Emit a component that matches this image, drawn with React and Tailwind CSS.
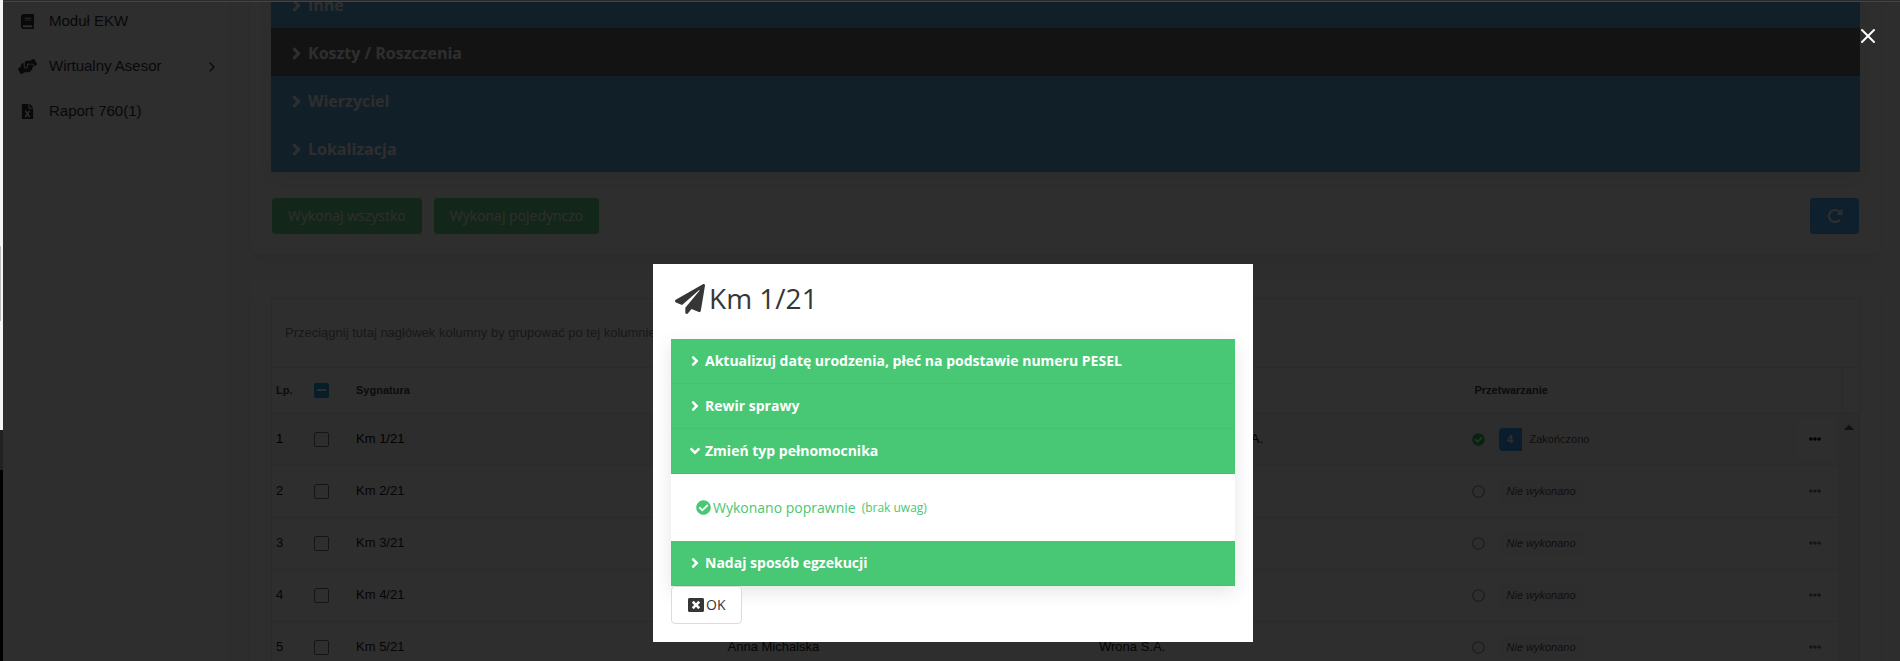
import { useState } from "react";
import {
    FaAngleDown,
    FaAngleRight,
    FaBook,
    FaCaretUp,
    FaCheckCircle,
    FaEllipsisH,
    FaFileExcel,
    FaHandsHelping,
    FaPaperPlane,
    FaRegCircle,
    FaWindowClose,
} from "react-icons/fa";
import { FaRotateRight } from "react-icons/fa6";
import { ChevronRight, X } from "lucide-react";

const menu = [
    { label: "Moduł EKW", icon: FaBook, size: 15 },
    { label: "Wirtualny Asesor", icon: FaHandsHelping, size: 19, nested: true },
    { label: "Raport 760(1)", icon: FaFileExcel, size: 15 },
];

const sections = [
    { label: "Inne" },
    { label: "Koszty / Roszczenia", dark: true },
    { label: "Wierzyciel" },
    { label: "Lokalizacja" },
];

const cases = [
    { id: 1, creditor: "Towarzystwo Handlowe S.A.", done: 4 },
    { id: 2 },
    { id: 3 },
    { id: 4 },
    { id: 5, debtor: "Anna Michalska", creditor: "Wrona S.A." },
];

const results = [
    "Aktualizuj datę urodzenia, płeć na podstawie numeru PESEL",
    "Rewir sprawy",
    "Zmień typ pełnomocnika",
    "Nadaj sposób egzekucji",
];

const Sidebar = () => (
    <aside className="w-[226px] shrink-0 border-r border-[#f0f0f0] font-['Liberation_Sans',sans-serif] text-[15px] text-[#333]">
        <nav className="-mt-[3px]">
            {menu.map(({ label, icon: Icon, size, nested }) => (
                <a key={label} href="#" className="flex h-[45px] items-center pr-2">
                    <span className="ml-2.5 mr-2 flex w-7 justify-center">
                        <Icon size={size} />
                    </span>
                    <span className="flex-1">{label}</span>
                    {nested && <ChevronRight size={16} />}
                </a>
            ))}
        </nav>
    </aside>
);

const Sections = () => (
    <section className="-mt-[42px] rounded-md bg-[#fcfcfc] p-5 shadow-[0_6px_18px_rgba(0,0,0,0.05)]">
        <div className="shadow-[0_6px_18px_rgba(0,0,0,0.06)]">
            {sections.map(({ label, dark }) => (
                <button
                    key={label}
                    className={`flex h-12 w-full items-center gap-0.5 px-4 pt-0.5 text-base font-bold text-white ${dark ? "bg-[#6a6a6a]" : "bg-[#5eacde]"}`}
                >
                    <FaAngleRight size={19} />
                    {label}
                </button>
            ))}
        </div>
        <div className="mt-[26px] flex gap-3 px-px text-sm text-white">
            <button className="h-9 rounded-sm bg-[#6ad391] px-4">Wykonaj wszystko</button>
            <button className="h-9 rounded-sm bg-[#6ad391] px-4">Wykonaj pojedynczo</button>
            <button aria-label="Odśwież" className="ml-auto flex h-9 w-[49px] items-center justify-center rounded-sm bg-[#4ea9ff]">
                <FaRotateRight size={16} />
            </button>
        </div>
    </section>
);

const Status = ({ done }) => {
    if (!done) {
        return (
            <div className="flex items-center text-[11px] italic text-[#555]">
                <FaRegCircle size={13} className="mr-3.5 text-[#999]" />
                <span className="rounded bg-[#f8f8f8] px-2 py-1">Nie wykonano</span>
            </div>
        );
    }
    return (
        <div className="flex items-center text-[11px] text-[#555]">
            <FaCheckCircle size={13} className="mr-3.5 text-[#2fbf62]" />
            <span className="mr-2 flex size-[23px] items-center justify-center rounded-l bg-[#3f9df8] font-bold text-white">
                {done}
            </span>
            Zakończono
        </div>
    );
};

const CaseGrid = () => (
    <section className="mt-6 rounded-md bg-[#fcfcfc] p-5 shadow-[0_6px_18px_rgba(0,0,0,0.05)]">
        <div className="border border-[#e8e8e8] font-['Liberation_Sans',sans-serif] text-[13px]">
            <div className="flex h-[69px] items-center border-b border-[#e8e8e8] px-[13px] text-[#888]">
                Przeciągnij tutaj nagłówek kolumny by grupować po tej kolumnie
            </div>
            <div className="flex">
                <table className="w-full table-fixed text-left text-[#222]">
                    <thead>
                        <tr className="h-[45px] border-b border-[#e8e8e8] text-[11px] text-[#444]">
                            <th className="w-10 px-1">Lp.</th>
                            <th className="w-10">
                                <label className="relative ml-0.5 flex size-[15px] items-center justify-center">
                                    <input type="checkbox" aria-label="Zaznacz wszystkie" className="absolute inset-0 appearance-none rounded-xs bg-[#2aa5dc]" />
                                    <span className="relative h-0.5 w-[9px] bg-white" />
                                </label>
                            </th>
                            <th className="px-1">Sygnatura</th>
                            <th className="px-1">Dłużnik</th>
                            <th className="px-1">Wierzyciel</th>
                            <th className="px-2">Przetwarzanie</th>
                        </tr>
                    </thead>
                    <tbody>
                        {cases.map(({ id, debtor, creditor, done }) => (
                            <tr key={id} className={`h-[52px] border-b border-[#e8e8e8] ${done ? "bg-[#f8f8f8] text-black" : ""}`}>
                                <td className="px-1">{id}</td>
                                <td>
                                    <input
                                        type="checkbox"
                                        aria-label={`Km ${id}/21`}
                                        className="ml-0.5 block size-[15px] appearance-none rounded-xs border border-[#777]"
                                    />
                                </td>
                                <td className="px-1">Km {id}/21</td>
                                <td className="px-1">{debtor}</td>
                                <td className="px-1">{creditor}</td>
                                <td className="pl-[5px]">
                                    <div className="flex items-center justify-between">
                                        <Status done={done} />
                                        <button
                                            aria-label="Więcej"
                                            className={`mr-1 flex h-10 w-[38px] items-center justify-center ${done ? "bg-[#fcfcfc] text-black" : "text-[#777]"}`}
                                        >
                                            <FaEllipsisH size={12} />
                                        </button>
                                    </div>
                                </td>
                            </tr>
                        ))}
                    </tbody>
                </table>
                <div className="w-[21px] shrink-0 bg-[#f4f4f4] text-[#666]">
                    <div className="h-[45px] border-b border-[#e8e8e8] bg-[#fcfcfc] pl-1">
                        <div className="h-full border-l border-[#e8e8e8]" />
                    </div>
                    <FaCaretUp size={16} className="mx-auto mt-1.5" />
                </div>
            </div>
        </div>
    </section>
);

const ResultModal = ({ onClose }) => {
    const [open, setOpen] = useState(2);

    return (
        <div className="absolute inset-0 flex items-start justify-center bg-black/82 pl-[3px] pt-[262px]">
            <button onClick={onClose} aria-label="Zamknij" className="absolute right-5 top-[22px] text-white">
                <X size={24} />
            </button>
            <div role="dialog" aria-labelledby="modal-title" className="w-[600px] bg-white px-[18px] pb-[18px] pt-4 text-[#363636]">
                <h1 id="modal-title" className="flex h-[59px] items-start gap-1 pl-1 text-[28px] leading-9 font-medium">
                    <FaPaperPlane size={30} className="mt-1" />
                    Km 1/21
                </h1>
                <div className="shadow-[0_6px_18px_rgba(0,0,0,0.1)]">
                    {results.map((label, i) => (
                        <div key={label}>
                            <button
                                onClick={() => setOpen(i)}
                                className="flex h-[45px] w-full items-center gap-0.5 border-b border-[#45c172] bg-[#48c774] px-4 text-sm font-bold text-white"
                            >
                                {open === i ? <FaAngleDown size={16} /> : <FaAngleRight size={16} />}
                                {label}
                            </button>
                            {open === i && (
                                <p className="flex h-[67px] items-center px-[25px] text-sm text-[#48c774]">
                                    <FaCheckCircle size={15} className="mr-0.5" />
                                    Wykonano poprawnie
                                    <small className="ml-1.5 text-xs">(brak uwag)</small>
                                </p>
                            )}
                        </div>
                    ))}
                </div>
                <button
                    onClick={onClose}
                    className="relative flex h-[38px] items-center gap-0.5 rounded border border-[#dbdbdb] bg-white px-4 text-sm"
                >
                    <FaWindowClose size={16} />
                    OK
                </button>
            </div>
        </div>
    );
};

export default function App() {
    const [showModal, setShowModal] = useState(true);

    return (
        <div className="flex h-screen overflow-hidden bg-[#fcfcfc] font-['Open_Sans',sans-serif]">
            {/* edge of the window behind */}
            <div className="flex w-[3px] shrink-0 flex-col bg-black">
                <div className="h-[246px] bg-[#f5f5f5]" />
                <div className="h-[75px] border-l border-[#bbb] bg-[#f5f5f5]" />
                <div className="h-[109px] bg-[#f5f5f5]" />
                <div className="h-10 bg-[#222]" />
            </div>
            <div className="flex min-w-0 flex-1 flex-col">
                <div className="h-0.5 shrink-0 border-b border-[#444] bg-[#2b2b2b]" />
                <div className="relative flex min-h-0 flex-1 overflow-hidden">
                    <Sidebar />
                    <main className="min-w-0 flex-1 bg-[#fafafa] pl-[22px] pr-5">
                        <Sections />
                        <CaseGrid />
                    </main>
                    {showModal && <ResultModal onClose={() => setShowModal(false)} />}
                </div>
            </div>
        </div>
    );
}
